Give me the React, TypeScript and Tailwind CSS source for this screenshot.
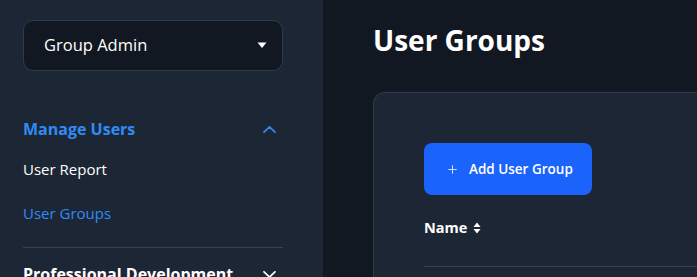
import React from "react";
import { Plus } from "lucide-react";

const font = { fontFamily: '"Open Sans", "Liberation Sans", sans-serif' };

const Chevron = ({ up, color }: { up?: boolean; color: string }) => (
    <svg width="13" height="7" viewBox="0 0 13 7" fill="none" stroke={color} strokeWidth="1.7" strokeLinecap="round" strokeLinejoin="round">
        {up ? <path d="M1 6.2 L6.5 0.9 L12 6.2" /> : <path d="M1 0.8 L6.5 6.1 L12 0.8" />}
    </svg>
);

export default function App() {
    return (
        <div className="flex h-[277px] w-[697px] overflow-hidden bg-[#121822] text-white" style={font}>
            {/* sidebar */}
            <aside className="flex w-[323px] shrink-0 flex-col bg-[#1d2635] px-[23px] pt-[20px]">
                <button className="flex h-[51px] w-[260px] shrink-0 items-center justify-between rounded-[10px] border border-[#2f3a4d] bg-[#121822] pl-[20px] pr-[15px] text-[16.5px] font-medium text-white">
                    <span>Group Admin</span>
                    <svg width="10" height="7" viewBox="0 0 10 7"><path d="M0.5 0.5 H9.5 L5 6 Z" fill="white" /></svg>
                </button>

                <div className="mt-[46px] flex w-[260px] shrink-0 items-center justify-between pr-[7px]">
                    <span className="text-[16px] font-bold text-[#2f8cf5]">Manage Users</span>
                    <Chevron up color="#2f8cf5" />
                </div>
                <div className="mt-[17px] shrink-0 text-[15px] font-medium text-white">User Report</div>
                <div className="mt-[21px] shrink-0 text-[15px] font-medium text-[#2f8cf5]">User Groups</div>
                <div className="mt-[23px] h-px w-[260px] shrink-0 bg-[#354156]" />
                <div className="mt-[14px] flex w-[260px] shrink-0 items-center justify-between pr-[7px]">
                    <span className="text-[16px] font-bold text-white">Professional Development</span>
                    <Chevron color="white" />
                </div>
            </aside>

            {/* main */}
            <main className="flex-1 pl-[50px] pt-[21px]">
                <h1 className="text-[28px] font-bold leading-[38px]">User Groups</h1>
                <div className="mt-[33px] h-[200px] rounded-tl-[12px] border-l border-t border-[#2f3a4d] bg-[#1d2635] pl-[50px] pt-[50px]">
                    <button className="flex h-[52px] w-[168px] items-center gap-[10px] rounded-[8px] bg-[#1a63fb] pl-[22px] text-[13.5px] font-semibold text-white">
                        <Plus className="h-[13px] w-[13px]" strokeWidth={1.5} />
                        <span>Add User Group</span>
                    </button>
                    <div className="mt-[22px] flex items-center gap-[6px] text-[14.5px] font-bold">
                        <span>Name</span>
                        <svg width="8" height="12" viewBox="0 0 8 12"><path d="M4 0.5 L7.5 5 H0.5 Z M0.5 7 H7.5 L4 11.5 Z" fill="white" /></svg>
                    </div>
                    <div className="mt-[27px] h-px bg-[#354156]" />
                </div>
            </main>
        </div>
    );
}
